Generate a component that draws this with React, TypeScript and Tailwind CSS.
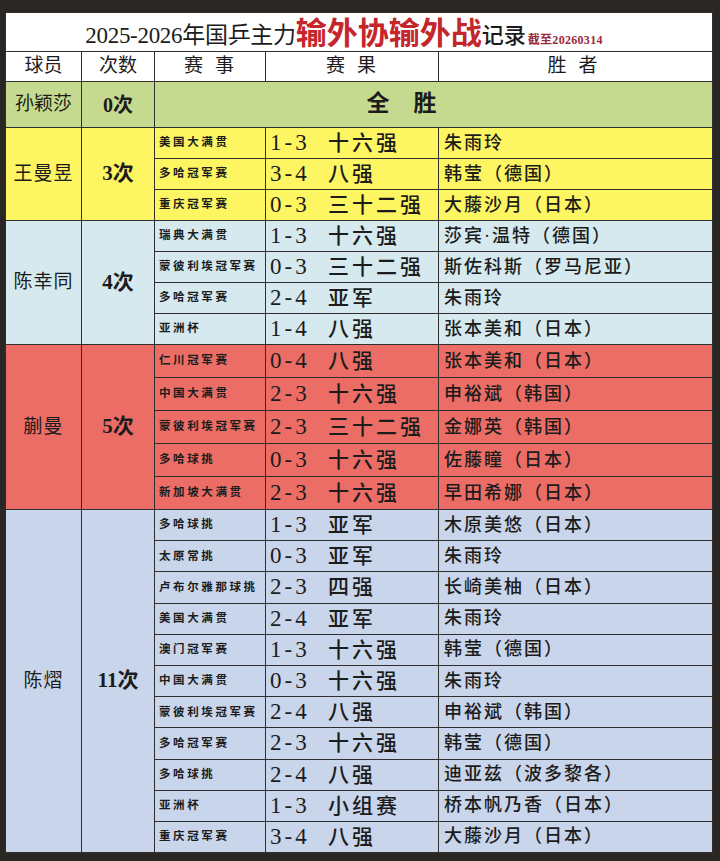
import React from "react";

type Row = [string, string, string, string];

const groups: {
  name: string;
  count: string;
  bg: string;
  rowH: string;
  rows: Row[];
}[] = [
  {
    name: "王曼昱",
    count: "3",
    bg: "bg-[#fdf562]",
    rowH: "h-[31px]",
    rows: [
      ["美国大满贯", "1-3", "十六强", "朱雨玲"],
      ["多哈冠军赛", "3-4", "八强", "韩莹（德国）"],
      ["重庆冠军赛", "0-3", "三十二强", "大藤沙月（日本）"],
    ],
  },
  {
    name: "陈幸同",
    count: "4",
    bg: "bg-[#d5e9ee]",
    rowH: "h-[31px]",
    rows: [
      ["瑞典大满贯", "1-3", "十六强", "莎宾·温特（德国）"],
      ["蒙彼利埃冠军赛", "0-3", "三十二强", "斯佐科斯（罗马尼亚）"],
      ["多哈冠军赛", "2-4", "亚军", "朱雨玲"],
      ["亚洲杯", "1-4", "八强", "张本美和（日本）"],
    ],
  },
  {
    name: "蒯曼",
    count: "5",
    bg: "bg-[#ec6d66]",
    rowH: "h-[33px]",
    rows: [
      ["仁川冠军赛", "0-4", "八强", "张本美和（日本）"],
      ["中国大满贯", "2-3", "十六强", "申裕斌（韩国）"],
      ["蒙彼利埃冠军赛", "2-3", "三十二强", "金娜英（韩国）"],
      ["多哈球挑", "0-3", "十六强", "佐藤瞳（日本）"],
      ["新加坡大满贯", "2-3", "十六强", "早田希娜（日本）"],
    ],
  },
  {
    name: "陈熠",
    count: "11",
    bg: "bg-[#c9d5ea]",
    rowH: "h-[31.2px]",
    rows: [
      ["多哈球挑", "1-3", "亚军", "木原美悠（日本）"],
      ["太原常挑", "0-3", "亚军", "朱雨玲"],
      ["卢布尔雅那球挑", "2-3", "四强", "长崎美柚（日本）"],
      ["美国大满贯", "2-4", "亚军", "朱雨玲"],
      ["澳门冠军赛", "1-3", "十六强", "韩莹（德国）"],
      ["中国大满贯", "0-3", "十六强", "朱雨玲"],
      ["蒙彼利埃冠军赛", "2-4", "八强", "申裕斌（韩国）"],
      ["多哈冠军赛", "2-3", "十六强", "韩莹（德国）"],
      ["多哈球挑", "2-4", "八强", "迪亚兹（波多黎各）"],
      ["亚洲杯", "1-3", "小组赛", "桥本帆乃香（日本）"],
      ["重庆冠军赛", "3-4", "八强", "大藤沙月（日本）"],
    ],
  },
];

const cell = "border-[1.5px] border-[#2f2f2f]";

export default function App() {
  return (
    <div
      className="min-h-[861px] w-[720px] bg-[#2a2623] pt-[12px] pl-[5px] text-[#1c1c1c]"
      style={{ fontFamily: '"Liberation Serif", "Noto Sans CJK SC", serif' }}
    >
      <table className="w-[707px] table-fixed border-collapse">
        <colgroup>
          <col className="w-[76px]" />
          <col className="w-[73px]" />
          <col className="w-[111px]" />
          <col className="w-[173px]" />
          <col className="w-[274px]" />
        </colgroup>
        <tbody>
          <tr className="h-[39px] bg-white">
            <td colSpan={5} className={cell}>
              <div className="flex items-end justify-center pr-[30px] pt-[3px]">
                <span className="text-[23px] leading-[30px] tracking-[-0.3px]">2025-2026年国乒主力</span>
                <span className="text-[31px] font-bold leading-[34px] text-[#c4262b]">输外协输外战</span>
                <span className="text-[22px] font-medium leading-[30px]">记录</span>
                <span className="mb-[5px] ml-[2px] text-[12px] font-bold leading-[12px] tracking-[0.3px] text-[#9a2a3a]">截至20260314</span>
              </div>
            </td>
          </tr>
          <tr className="h-[30px] bg-white text-[19px]">
            <td className={`${cell} text-center`}>球员</td>
            <td className={`${cell} text-center`}>次数</td>
            <td className={`${cell} text-center tracking-[12px] pl-[10px]`}>赛事</td>
            <td className={`${cell} text-center tracking-[12px] pl-[10px]`}>赛果</td>
            <td className={`${cell} text-center tracking-[12px] pl-[6px]`}>胜者</td>
          </tr>
          <tr className="h-[46px] bg-[#c5da8e]">
            <td className={`${cell} text-center text-[19px]`}>孙颖莎</td>
            <td className={`${cell} text-center text-[20px] font-bold`}>0次</td>
            <td colSpan={3} className={`${cell} pr-[40px] text-center text-[23px] font-bold tracking-[24px]`}>
              全胜
            </td>
          </tr>
          {groups.map((g) =>
            g.rows.map((r, i) => (
              <tr key={g.name + i} className={`${g.rowH} ${g.bg}`}>
                {i === 0 && (
                  <>
                    <td rowSpan={g.rows.length} className={`${cell} text-center text-[19px] tracking-[1px]`}>
                      {g.name}
                    </td>
                    <td rowSpan={g.rows.length} className={`${cell} text-center text-[21px] font-bold`}>
                      {g.count}次
                    </td>
                  </>
                )}
                <td className={`${cell} whitespace-nowrap pl-[4px] text-[11.5px] font-semibold tracking-[2.6px]`}>{r[0]}</td>
                <td className={`${cell} whitespace-nowrap pl-[4px]`}>
                  <div className="flex items-center">
                    <span className="w-[58px] text-[23px] leading-[26px] tracking-[3px]">{r[1]}</span>
                    <span className="text-[21px] font-medium leading-[26px] tracking-[3px]">{r[2]}</span>
                  </div>
                </td>
                <td className={`${cell} whitespace-nowrap pl-[5px] text-[18px] font-medium tracking-[2px]`}>{r[3]}</td>
              </tr>
            ))
          )}
        </tbody>
      </table>
    </div>
  );
}
